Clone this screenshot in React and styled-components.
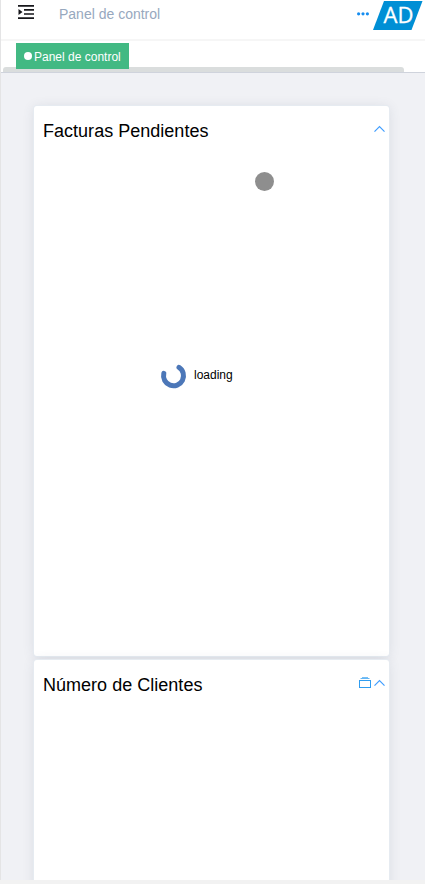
import React from "react";
import styled, { createGlobalStyle } from "styled-components";

const Global = createGlobalStyle`
  * { box-sizing: border-box; }
  body { margin: 0; background: #f2f2f2; font-family: "Liberation Sans", Arial, sans-serif; }
  svg { display: block; }
`;

const Shell = styled.div`
  height: 884px;
  padding-bottom: 4px;
  background: #f2f2f2;
  overflow: hidden;
`;
const Page = styled.div`
  height: 880px;
  display: flex;
  flex-direction: column;
  border-left: 1px solid #e4e4e5;
  background: #f0f1f5;
  overflow: hidden;
`;
const Navbar = styled.header`
  height: 39px;
  flex: none;
  display: flex;
  align-items: flex-start;
  background: #fff;
  padding-right: 2px;
`;
const MenuToggle = styled.div`
  margin: 5px 0 0 17px;
`;
const Breadcrumb = styled.span`
  margin: 5px auto 0 25px;
  font-size: 14px;
  line-height: 19px;
  color: #97a8be;
`;
const More = styled.div`
  margin: 12px 4px 0 0;
`;
const Avatar = styled.div`
  width: 50px;
  height: 29px;
  margin-top: 1px;
  padding-left: 1px;
  background: #008fd5;
  clip-path: polygon(22% 0, 99% 0, 77% 100%, 0 100%);
  color: #fff;
  font: 22px/27px "Open Sans", "Noto Sans", sans-serif;
  -webkit-text-stroke: 0.3px #fff;
  text-align: center;
`;
const TagsBar = styled.nav`
  height: 34px;
  flex: none;
  display: flex;
  flex-direction: column;
  background: #fff;
  border-top: 2px solid #f6f6f6;
  border-bottom: 1px solid #cfd3dc;
`;
const Tag = styled.div`
  width: 113px;
  height: 26px;
  margin: 2px 0 0 15px;
  padding: 2px 0 0 8px;
  flex: none;
  display: flex;
  align-items: center;
  gap: 2px;
  background: #42b983;
  color: #fff;
  font-size: 12px;
  line-height: 28px;
  white-space: nowrap;
  z-index: 1;
`;
const Dot = styled.i`
  width: 8px;
  height: 8px;
  margin-top: -2px;
  border-radius: 50%;
  background: #fff;
`;
const ScrollThumb = styled.div`
  width: 401px;
  height: 5px;
  flex: none;
  margin: -2px 0 0 2px;
  border-radius: 3px 3px 0 0;
  background: #dadddd;
`;
const Content = styled.main`
  flex: 1;
  min-height: 0;
  display: flex;
  flex-direction: column;
  gap: 4px;
  padding: 33px 36px 0 33px;
  overflow: hidden;
`;
const Card = styled.section`
  height: 550px;
  flex: none;
  display: flex;
  flex-direction: column;
  background: #fff;
  border-radius: 3px;
  box-shadow: 0 0 0 1px #e6ebf1, 0 1px 12px rgba(60, 80, 100, 0.13);
`;
const CardHeader = styled.div`
  height: 50px;
  flex: none;
  display: flex;
  justify-content: space-between;
  padding: 0 4px 0 9px;
`;
const Title = styled.h2`
  margin: 0;
  font-size: 18px;
  line-height: 50px;
  letter-spacing: 0.02px;
  font-weight: 400;
  color: #000;
`;
const Actions = styled.div`
  display: flex;
  align-items: flex-start;
  gap: 3px;
  padding-top: 17px;
`;
const Pointer = styled.div`
  width: 19px;
  height: 19px;
  flex: none;
  margin: 16px 0 0 221px;
  border-radius: 50%;
  background: #8e8e8e;
`;
const Loading = styled.div`
  display: flex;
  align-items: center;
  gap: 6px;
  height: 30px;
  margin: 170px 0 0 126px;
  font-size: 12px;
  line-height: 28px;
  color: #000;
`;
const LoadingText = styled.span`
  padding-bottom: 2px;
`;

const Chevron = () => (
  <svg width="11" height="12" viewBox="0 0 11 12" fill="none" stroke="#409eff" strokeWidth="1.2">
    <path d="M.5 8.7 5.5 3.6l5 5.1" />
  </svg>
);
const Stack = () => (
  <svg width="12" height="12" viewBox="0 0 12 12" fill="none" stroke="#309df0">
    <rect x=".5" y="3.5" width="11" height="7" />
    <path d="M3 .5h6" strokeOpacity=".65" />
    <path d="M1.5 1.5h9" strokeOpacity=".75" />
  </svg>
);

export default function App() {
  return (
    <Shell>
      <Global />
      <Page>
        <Navbar>
          <MenuToggle>
            <svg width="16" height="14" viewBox="0 0 16 14" fill="#17171b">
              <path d="M0 0h16v1.7H0zM6 4.1h10v1.6H6zM6 8.2h10v1.6H6zM0 12.3h16V14H0zM.5 4l4 3-4 3z" />
            </svg>
          </MenuToggle>
          <Breadcrumb>Panel de control</Breadcrumb>
          <More>
            <svg width="12" height="4" viewBox="0 0 12 4" fill="#168df0">
              <circle cx="1.6" cy="1.8" r="1.6" />
              <circle cx="6" cy="1.8" r="1.6" />
              <circle cx="10.4" cy="1.8" r="1.6" />
            </svg>
          </More>
          <Avatar>AD</Avatar>
        </Navbar>
        <TagsBar>
          <Tag><Dot />Panel de control</Tag>
          <ScrollThumb />
        </TagsBar>
        <Content>
          <Card>
            <CardHeader>
              <Title>Facturas Pendientes</Title>
              <Actions><Chevron /></Actions>
            </CardHeader>
            <Pointer />
            <Loading>
              <svg width="28" height="28" viewBox="0 0 28 28" fill="none" stroke="#4c77b8" strokeWidth="5" strokeLinecap="round">
                <path d="M3.8 11.4A10 10 0 1 0 19 5.4" />
              </svg>
              <LoadingText>loading</LoadingText>
            </Loading>
          </Card>
          <Card>
            <CardHeader>
              <Title>Número de Clientes</Title>
              <Actions><Stack /><Chevron /></Actions>
            </CardHeader>
          </Card>
        </Content>
      </Page>
    </Shell>
  );
}
